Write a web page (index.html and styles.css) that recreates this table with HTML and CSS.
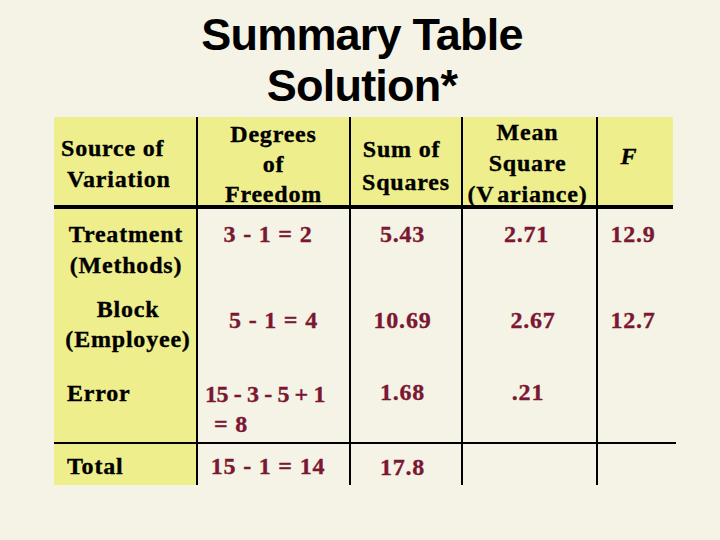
FILE: index.html
```html
<!DOCTYPE html>
<html>
<head>
<meta charset="utf-8">
<link rel="stylesheet" href="styles.css">
</head>
<body>
<h1 class="title">Summary Table<br>Solution*</h1>
<div class="anova">
  <div class="cell head c1 hs"><div>Source of</div><div class="ind">Variation</div></div>
  <div class="cell head v hd">Degrees<br>of<br>Freedom</div>
  <div class="cell head v hss"><span class="sumof">Sum of</span><br>Squares</div>
  <div class="cell head v hm">Mean<br>Square<br>(V&#8202;ariance)</div>
  <div class="cell head v hf"><i>F</i></div>

  <div class="cell c1 r1 ctr l1">Treatment<br>(Methods)</div>
  <div class="cell v r1 val d1">3 - 1 = 2</div>
  <div class="cell v r1 val s1">5.43</div>
  <div class="cell v r1 val m1">2.71</div>
  <div class="cell v r1 val f1">12.9</div>

  <div class="cell c1 r2 ctr l2">Block<br>(Employee)</div>
  <div class="cell v r2 val d2">5 - 1 = 4</div>
  <div class="cell v r2 val s2">10.69</div>
  <div class="cell v r2 val m2">2.67</div>
  <div class="cell v r2 val f2">12.7</div>

  <div class="cell c1 r3 left">Error</div>
  <div class="cell v r3 val d3"><div>15 - 3 - 5 + 1</div><div class="eq">= 8</div></div>
  <div class="cell v r3 val s3">1.68</div>
  <div class="cell v r3 val m3">.21</div>
  <div class="cell v r3 val last"></div>

  <div class="cell c1 r4 left">Total</div>
  <div class="cell v r4 val d4">15 - 1 = 14</div>
  <div class="cell v r4 val s4">17.8</div>
  <div class="cell v r4 val"></div>
  <div class="cell v r4 val"></div>
</div>
</body>
</html>
```

FILE: styles.css
```css
html, body {
  margin: 0;
  padding: 0;
  background: #f5f3e5;
}
body {
  width: 720px;
  height: 540px;
  overflow: hidden;
}
.title {
  margin: 9px 0 0 0;
  padding-left: 4px;
  font-family: "Liberation Sans", Arial, sans-serif;
  font-weight: bold;
  font-size: 45px;
  line-height: 51px;
  letter-spacing: -0.8px;
  text-align: center;
  color: #000;
}
.anova {
  margin: 6px 0 0 54px;
  display: grid;
  grid-template-columns: 142px 153px 112px 135px 77px;
  grid-template-rows: 92px 76px 77px 82px 41px;
  font-family: "Liberation Serif", "Times New Roman", serif;
  font-weight: bold;
  font-size: 24px;
  letter-spacing: 0.8px;
  line-height: 31px;
  color: #000;
  -webkit-text-stroke: 0.35px currentColor;
}
.cell {
  box-sizing: border-box;
  text-align: center;
  white-space: nowrap;
}
.v { border-left: 2px solid #000; }
.head {
  background: #eeee8c;
  border-bottom: 4px solid #000;
}
.c1 { background: #eeee8c; }
.r3 { border-bottom: 2px solid #000; }
.r3.last { margin-right: -3px; }

/* header cells */
.hs { text-align: left; padding: 16px 0 0 7px; }
.hs .ind { padding-left: 6px; }
.hd { line-height: 30px; padding-top: 2px; }
.hss { line-height: 33px; padding-top: 16px; }
.hss .sumof { padding-right: 9px; }
.hm { padding-top: 0; padding-right: 4px; }
.hf { padding: 24px 13px 0 0; }

/* rows */
.r1 { padding-top: 10px; }
.r2 { padding-top: 20px; }
.r3 { padding-top: 15px; }
.r4 { padding-top: 7px; }

.val { color: #7b1733; }
.l1 { padding-left: 2px; }
.l2 { padding-top: 9px; line-height: 30px; padding-left: 6px; }
.left { text-align: left; padding-left: 13px; }
.c1.r3 { padding-top: 16px; }

.d1 { padding-right: 11px; }
.d3 { text-align: left; padding-left: 7px; padding-top: 17px; line-height: 30px; letter-spacing: -0.4px; }
.d3 .eq { padding-left: 9px; letter-spacing: 0.8px; }
.d4 { padding-right: 11px; }
.s1, .s2, .s3, .s4 { padding-right: 7px; }
.s4 { padding-top: 8px; }
.m1 { padding-right: 6px; }
.m2 { padding-left: 7px; }
.m3 { padding-right: 3px; }
.f1, .f2 { padding-right: 5px; }
```
